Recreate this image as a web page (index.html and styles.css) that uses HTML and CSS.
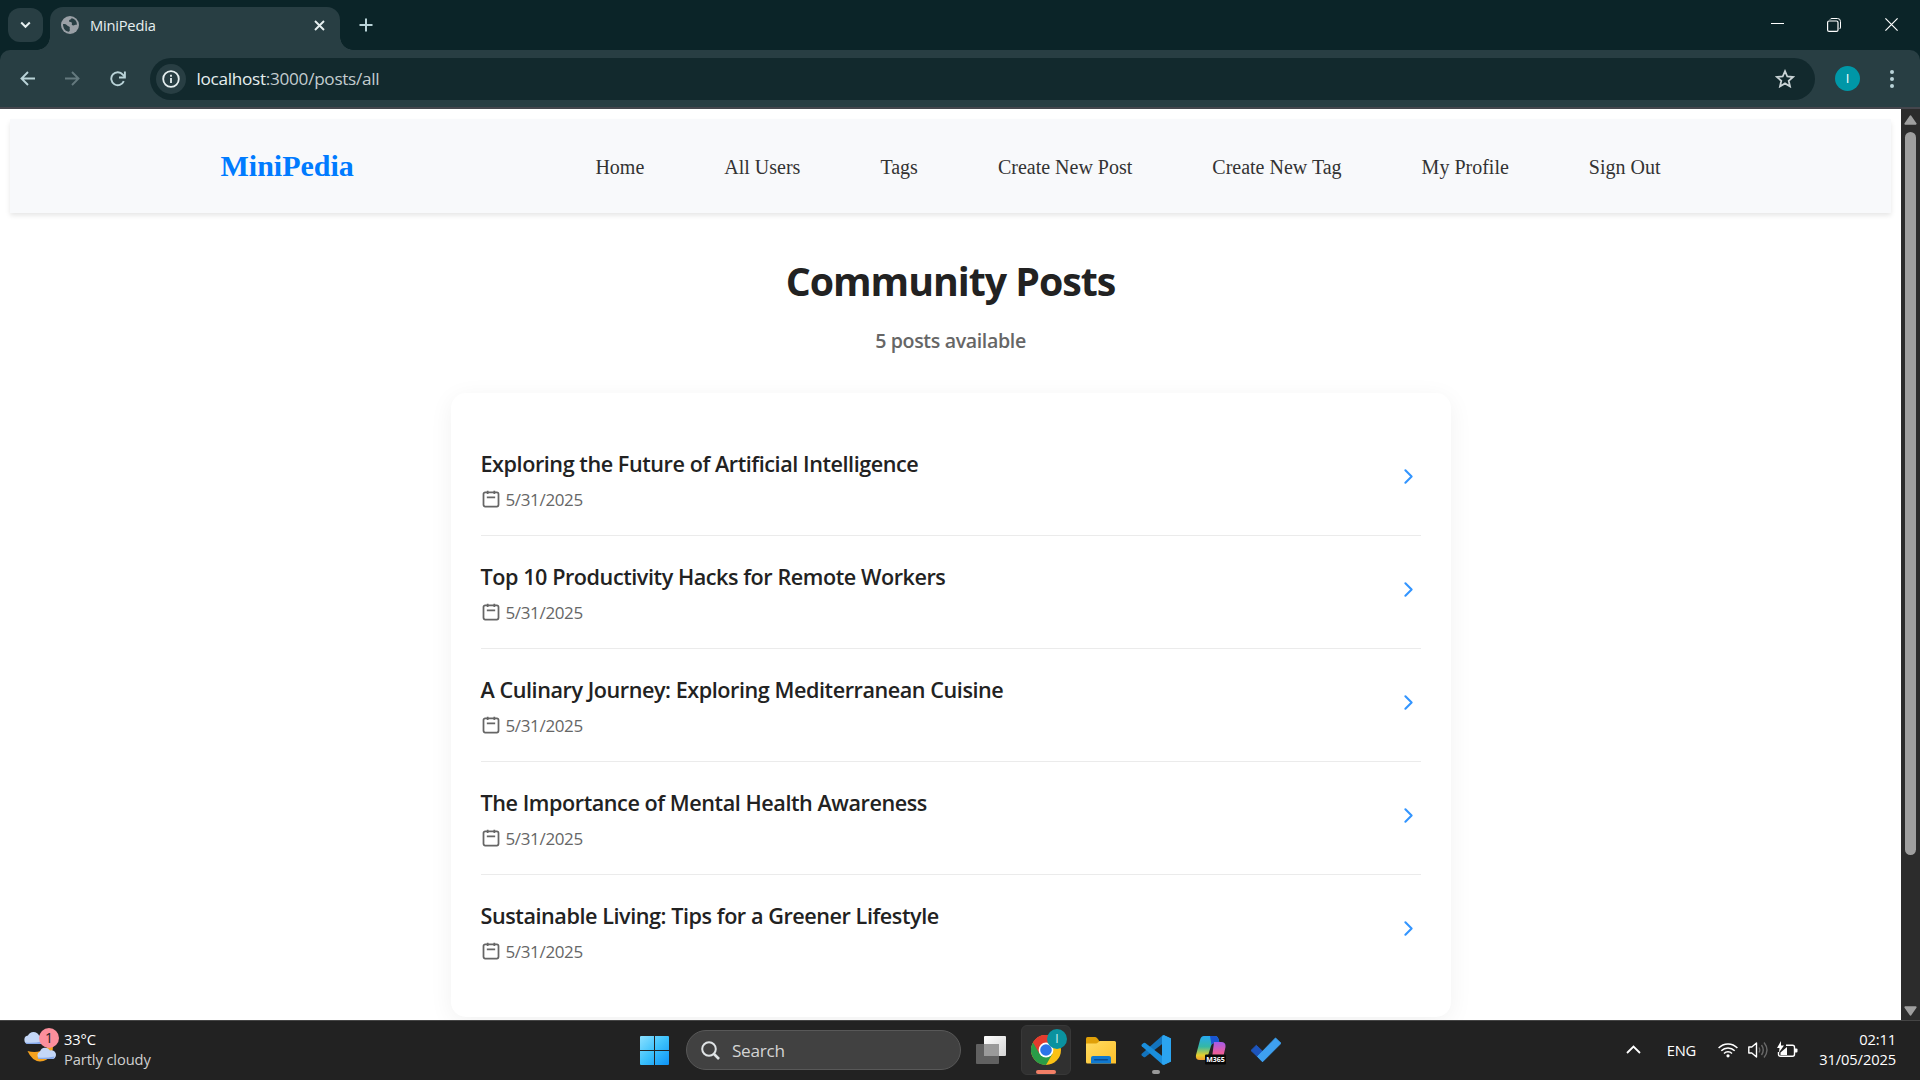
FILE: index.html
```
<!DOCTYPE html>
<html lang="en">
<head>
<meta charset="utf-8">
<title>MiniPedia</title>
<link rel="stylesheet" href="styles.css">
</head>
<body>
<div class="screen">
  <header class="tabstrip">
    <button class="tab-search" aria-label="Search tabs"><svg width="11" height="8" viewBox="0 0 11 8"><path d="M1.2 1.5l4.3 4.3 4.3-4.3" fill="none" stroke="#e6eff0" stroke-width="2"/></svg></button>
    <div class="tab">
      <svg width="18" height="18" viewBox="0 0 18 18"><circle cx="9" cy="9" r="9" fill="#9aa0a6"/><path d="M2 8c2-.3 3.600.3 4.300 1.600.5 1 1.700.7 2.300 1.500.6.800-.3 1.700.2 2.500.4.700-.4 1.700-.900 2.200C4.500 15.500 2 12.600 2 8zM10.500 2.200c-.300 1.300-1.800 1.200-2.400 2.200-.500.9.4 1.500 1.400 1.500 1.400 0 1.700 1.200 1.300 2.200-.3.900.5 1.400 1.500 1.400 1.200 0 2-.8 3.500-.6.5-3.500-1.800-6-5.300-6.700z" fill="#283e43"/></svg>
      <span class="tab-title">MiniPedia</span>
      <svg class="tab-close" width="11" height="11" viewBox="0 0 11 11"><path d="M1 1l9 9M10 1l-9 9" stroke="#e6eff0" stroke-width="1.900"/></svg>
    </div>
    <svg class="new-tab" width="14" height="14" viewBox="0 0 14 14"><path d="M7 .5v13M.5 7h13" stroke="#b9d3d8" stroke-width="2"/></svg>
    <div class="window-controls">
      <svg width="13" height="13" viewBox="0 0 13 13"><path d="M0 5.500h13" stroke="#fff"/></svg>
      <svg width="14" height="14" viewBox="0 0 14 14" fill="none" stroke="#fff"><path d="M3 1.500q.5-1 2-1h5.500q3 0 3 3V9q0 1.500-1 2" /><rect x=".6" y="3" width="10.400" height="10.400" rx="1.500" stroke-width="1.200"/></svg>
      <svg width="13" height="13" viewBox="0 0 13 13"><path d="M.4.4l12.200 12.200M12.600.4L.4 12.600" stroke="#fff" stroke-width="1.200"/></svg>
    </div>
  </header>

  <div class="toolbar">
    <div class="nav-buttons">
      <svg width="15" height="15" viewBox="0 0 15 15"><path d="M15 7.500H1.500M8 1L1.500 7.500 8 14" fill="none" stroke="#b9d3d8" stroke-width="1.900"/></svg>
      <svg width="15" height="15" viewBox="0 0 15 15"><path d="M0 7.500h13.500M7 1l6.500 6.500L7 14" fill="none" stroke="#64797e" stroke-width="1.900"/></svg>
      <svg width="16" height="16" viewBox="0 0 16 16"><path d="M13.800 10.200A6.500 6.500 0 1 1 12.800 3.600L14.800 6" fill="none" stroke="#b9d3d8" stroke-width="1.900"/><path d="M14.900.5v6H9" fill="none" stroke="#b9d3d8" stroke-width="1.900"/></svg>
    </div>
    <div class="omnibox">
      <span class="site-info"><svg width="18" height="18" viewBox="0 0 18 18"><circle cx="9" cy="9" r="7.800" fill="none" stroke="#e6eff0" stroke-width="1.800"/><path d="M9 8v5M9 4.800v1.900" stroke="#e6eff0" stroke-width="1.800"/></svg></span>
      <span class="url"><b>localhost</b>:3000/posts/all</span>
      <svg class="star" width="20" height="19" viewBox="0 0 20 19"><path d="M10 2.200l2.300 5.300 5.800.5-4.400 3.800 1.300 5.600-5-3-5 3 1.300-5.600L1.900 8l5.800-.5z" fill="none" stroke="#c9d3d5" stroke-width="1.800"/></svg>
    </div>
    <span class="profile">I</span>
    <svg class="menu" width="4" height="18" viewBox="0 0 4 18" fill="#b9d3d8"><circle cx="2" cy="2" r="2"/><circle cx="2" cy="9" r="2"/><circle cx="2" cy="16" r="2"/></svg>
  </div>

  <div class="viewport">
    <div class="page">
      <nav class="navbar">
        <div class="navbar-inner">
          <a class="logo">MiniPedia</a>
          <ul class="links">
            <li>Home</li><li>All Users</li><li>Tags</li><li>Create New Post</li><li>Create New Tag</li><li>My Profile</li><li>Sign Out</li>
          </ul>
        </div>
      </nav>
      <main class="posts">
        <h1>Community Posts</h1>
        <p class="count">5 posts available</p>
        <ul class="card">
          <li class="post"><div><h2>Exploring the Future of Artificial Intelligence</h2><p class="date"><svg class="cal"><use href="#cal"/></svg>5/31/2025</p></div><svg class="chev"><use href="#chev"/></svg></li>
          <li class="post"><div><h2>Top 10 Productivity Hacks for Remote Workers</h2><p class="date"><svg class="cal"><use href="#cal"/></svg>5/31/2025</p></div><svg class="chev"><use href="#chev"/></svg></li>
          <li class="post"><div><h2>A Culinary Journey: Exploring Mediterranean Cuisine</h2><p class="date"><svg class="cal"><use href="#cal"/></svg>5/31/2025</p></div><svg class="chev"><use href="#chev"/></svg></li>
          <li class="post"><div><h2>The Importance of Mental Health Awareness</h2><p class="date"><svg class="cal"><use href="#cal"/></svg>5/31/2025</p></div><svg class="chev"><use href="#chev"/></svg></li>
          <li class="post"><div><h2>Sustainable Living: Tips for a Greener Lifestyle</h2><p class="date"><svg class="cal"><use href="#cal"/></svg>5/31/2025</p></div><svg class="chev"><use href="#chev"/></svg></li>
        </ul>
      </main>
    </div>
    <div class="scrollbar">
      <svg width="13" height="10" viewBox="0 0 13 10"><path d="M6.500 1.200L11.700 8.800H1.300z" fill="#9f9f9f" stroke="#9f9f9f" stroke-width="1.800" stroke-linejoin="round"/></svg>
      <span class="thumb"></span>
      <svg class="down" width="13" height="10" viewBox="0 0 13 10"><path d="M6.500 8.800L11.700 1.200H1.300z" fill="#9f9f9f" stroke="#9f9f9f" stroke-width="1.800" stroke-linejoin="round"/></svg>
    </div>
  </div>

  <footer class="taskbar">
    <div class="weather">
      <svg width="35" height="36" viewBox="0 0 35 36">
        <path d="M3.500 24Q8 34 16 34.500C26 34 30.500 25 28.500 15L26 13C26 21 16 27.500 3.500 24z" fill="#f6a21d"/>
        <path d="M4 17a4.300 4.300 0 0 1 0-8.500 6 6 0 0 1 11 0 4.300 4.300 0 0 1 2 8.500z" fill="#c4d7f7"/>
        <path d="M1 15.500q8 1 17-1 0 2.500-2 2.500H4q-2 0-3-1.500z" fill="#86a9ea"/>
        <path d="M16 32a4 4 0 0 1 0-7.500 5.500 5.500 0 0 1 10-1 4.500 4.500 0 0 1 3 8.500z" fill="#c4d7f7"/>
        <path d="M13.500 30.500q8 1 17-1-.5 2.500-2.500 2.500H16q-2 0-2.500-1.500z" fill="#86a9ea"/>
      </svg>
      <span class="alert">1</span>
      <p class="forecast"><span>33°C</span><span class="dim">Partly cloudy</span></p>
    </div>

    <div class="apps">
      <svg class="start" width="29" height="29" viewBox="0 0 29 29"><defs><linearGradient id="win" x1="0" y1="0" x2="29" y2="29" gradientUnits="userSpaceOnUse"><stop offset="0" stop-color="#8be0ff"/><stop offset=".5" stop-color="#3cc1fb"/><stop offset="1" stop-color="#0d92f5"/></linearGradient></defs><path d="M0 1q0-1 1-1h13v14H0zM15 0h13q1 0 1 1v13H15zM0 15h14v14H1q-1 0-1-1zM15 15h14v13q0 1-1 1H15z" fill="url(#win)"/></svg>
      <div class="search"><svg width="19" height="19" viewBox="0 0 19 19" fill="none" stroke="#dfe3e5"><circle cx="8" cy="8" r="6.800" stroke-width="2"/><path d="M13 13l5 5" stroke-width="2.600"/></svg>Search</div>
      <span class="app"><svg width="30" height="28" viewBox="0 0 30 28"><defs><linearGradient id="tv" x2="1" y2="1"><stop stop-color="#fff"/><stop offset="1" stop-color="#d4d4d4"/></linearGradient></defs><rect x="8" width="22" height="20" rx="1" fill="url(#tv)"/><rect y="8" width="23" height="20" rx="1" fill="#666" opacity=".93"/><path d="M8 8h15v12H8z" fill="#9a9a9a"/></svg></span>
      <span class="app active">
        <svg width="30" height="30" viewBox="0 0 30 30"><circle cx="15" cy="15" r="15" fill="#fbc116"/><path d="M15 15L2 7.500a15 15 0 0 1 26 0z" fill="#e33b2e"/><path d="M15 15L2 7.500A15 15 0 0 0 15 30l6.500-11.300z" fill="#2a9c48"/><path d="M15 7.500h13a15 15 0 0 0-26 0L8.500 18.700z" fill="#e33b2e"/><circle cx="15" cy="15" r="7.400" fill="#fff"/><circle cx="15" cy="15" r="5.800" fill="#2c74e8"/></svg>
        <span class="badge">I</span><span class="bar"></span>
      </span>
      <span class="app"><svg width="30" height="28" viewBox="0 0 30 28"><defs><linearGradient id="fold" x2="1" y2="1"><stop stop-color="#ffdc62"/><stop offset="1" stop-color="#fdc02a"/></linearGradient></defs><path d="M0 2.500Q0 1 1.500 1H9q1 0 2 1l2 2.500V8H0z" fill="#e0a008"/><path d="M0 8q0-.5.500-.5H10q1 0 2-1l1.500-1.500h15q1.500 0 1.500 1.500V27.500H1.500Q0 27.500 0 26z" fill="url(#fold)"/><path d="M5 27.500V22q0-2 2-2h16q2 0 2 2v5.500z" fill="#1079d0"/><rect x="8" y="23" width="14" height="1.500" rx=".7" fill="#0a4c91"/></svg></span>
      <span class="app running"><svg width="30" height="30" viewBox="0 0 30 30"><path d="M22.500 0L30 3.500v23L22.500 30z" fill="#2fa4ee"/><path d="M22 0L.8 18.800q-.8 1 0 1.700l1.800 1.500q.8.500 1.700 0L22.500 8z" fill="#1374be"/><path d="M22 30L.8 11.200q-.8-1 0-1.700L2.600 8q.8-.5 1.700 0L22.500 22z" fill="#1a8edb"/><path d="M22.500 0L30 3.500v23L22.500 30 21 28.500V1.500z" fill="#2ba4f0"/></svg><span class="bar"></span></span>
      <span class="app"><svg width="32" height="30" viewBox="0 0 32 30"><defs><linearGradient id="cpa" x1="0" y1="0" x2="0" y2="1"><stop stop-color="#27a9f2"/><stop offset=".45" stop-color="#35b8a4"/><stop offset=".8" stop-color="#e5cf2d"/><stop offset="1" stop-color="#f29b2c"/></linearGradient><linearGradient id="cpb" x1="0" y1="0" x2="0" y2="1"><stop stop-color="#a45bea"/><stop offset=".5" stop-color="#ea5c9f"/><stop offset="1" stop-color="#fb7a5c"/></linearGradient></defs><path d="M9 1h11q2.500 0 3.500 3l1 4h-5q-2.500 0-3.500 3l-3.500 11q-1 3-3.500 3H5q-5 0-4-5L5 5q1-4 4-4z" fill="url(#cpa)"/><path d="M15 1h5q2.500 0 3.500 3l1 4h-5q-2 0-3 2z" fill="#1955d2"/><path d="M19 7h7q5 0 4.500 5L28 23q-1 5-5 5h-9q2-1 3-5z" fill="url(#cpb)"/><rect x="10" y="19.500" width="21" height="10" rx="1" fill="#080808"/><text x="20.500" y="27.200" text-anchor="middle" class="m365">M365</text></svg></span>
      <span class="app"><svg width="30" height="26" viewBox="0 0 30 26"><path d="M5.300 8.300L0 13.500l11.500 11 5-5.500z" fill="#1d55bd" stroke="#1d55bd" stroke-linejoin="round"/><path d="M24.500 1L30 6.300 11.500 24.800 6.500 19.500z" fill="#3ea0f0" stroke="#3ea0f0" stroke-linejoin="round"/></svg></span>
    </div>

    <div class="tray">
      <svg width="15" height="9" viewBox="0 0 15 9"><path d="M1 8l6.500-6.500L14 8" fill="none" stroke="#fff" stroke-width="1.800"/></svg>
      <span class="lang">ENG</span>
      <svg class="wifi" width="20" height="16" viewBox="0 0 20 16" fill="none" stroke="#fff" stroke-width="1.500"><path d="M.6 6a13 13 0 0 1 18.800 0M3.300 8.800a9.400 9.400 0 0 1 13.400 0M6 11.500a5.700 5.700 0 0 1 8 0"/><circle cx="10" cy="13.800" r="1.600" fill="#fff" stroke="none"/></svg>
      <svg class="volume" width="20" height="18" viewBox="0 0 20 18" fill="none" stroke="#fff" stroke-width="1.400"><path d="M.8 6h3l4.700-4v14L3.800 12h-3z" stroke-linejoin="round"/><path d="M11 6.500q1.500 2.500 0 5M13.500 4q3.500 5 0 10M16 1.500q6 7.500 0 15" stroke="#696969"/></svg>
      <svg class="battery" width="21" height="18" viewBox="0 0 21 18"><path d="M9 4.200h6.500q2 0 2 2v7q0 2-2 2h-12q-2 0-2-2V11" fill="none" stroke="#fff" stroke-width="1.400"/><path d="M18 7.500h1.500q1 0 1 1v2q0 1-1 1H18z" fill="#fff"/><path d="M4 0L0 7h2.500L2 11.500 7 4.500H4zM10 6v8H3.500v-2.500z" fill="#fff"/></svg>
      <p class="clock"><span>02:11</span><span>31/05/2025</span></p>
    </div>
  </footer>
</div>

<svg class="sprite" width="0" height="0">
  <symbol id="cal" viewBox="0 0 24 24"><path d="M5 4h14a2 2 0 0 1 2 2v13a2 2 0 0 1-2 2H5a2 2 0 0 1-2-2V6a2 2 0 0 1 2-2zM8 2v4M16 2v4M7 10h10" fill="none" stroke="#666" stroke-width="2.100"/></symbol>
  <symbol id="chev" viewBox="0 0 24 24"><path d="M9 18l6-6-6-6" fill="none" stroke="#3395ff" stroke-width="2" stroke-linecap="round" stroke-linejoin="round"/></symbol>
</svg>
</body>
</html>
```
FILE: styles.css
```
* { box-sizing: border-box; margin: 0; padding: 0; }
ul { list-style: none; }
svg { display: block; flex: none; }
body { font-family: "Open Sans", "Noto Sans", sans-serif; background: #fff; overflow: hidden; }
.sprite { display: none; }
.screen { width: 1920px; height: 1080px; display: flex; flex-direction: column; background: #0b2428; }

/* Tab strip */
.tabstrip { height: 50px; flex: none; display: flex; align-items: flex-start; padding: 7px 22px 0 8px; }
.tab-search { width: 35px; height: 34px; margin-top: 1px; border: 0; border-radius: 12px; background: #283e43; display: flex; align-items: center; justify-content: center; }
.tab { position: relative; width: 290px; height: 43px; margin-left: 7px; padding: 0 15px 7px 11px; background: #283e43; border-radius: 13px 13px 0 0; display: flex; align-items: center; gap: 11px; }
.tab::before, .tab::after { content: ""; position: absolute; bottom: 0; width: 13px; height: 13px; }
.tab::before { right: 100%; background: radial-gradient(circle at 0 0, transparent 12.5px, #283e43 13px); }
.tab::after { left: 100%; background: radial-gradient(circle at 100% 0, transparent 12.5px, #283e43 13px); }
.tab-title { flex: 1; padding-bottom: 1px; font-size: 14.7px; letter-spacing: -0.22px; line-height: 20px; color: #e6eff0; }
.new-tab { margin: 11px 0 0 18.5px; }
.window-controls { margin: 10.5px 0 0 auto; display: flex; gap: 44px; }
.window-controls svg:first-child { margin-right: -1px; }

/* Toolbar */
.toolbar { height: 59px; flex: none; background: #283e43; border-bottom: 2px solid #45464d; border-radius: 10px 10px 0 0; display: flex; align-items: center; padding-left: 20px; }
.nav-buttons { display: flex; gap: 30px; width: 130px; }
.nav-buttons svg:last-child { margin-left: -0.5px; }
.omnibox { width: 1665px; height: 42px; border-radius: 21px; background: #12292d; display: flex; align-items: center; padding: 0 20px 0 6px; }
.site-info { width: 30px; height: 30px; border-radius: 50%; background: #283e43; display: flex; align-items: center; justify-content: center; }
.url { flex: 1; margin-left: 10.5px; padding-top: 1px; font-size: 17.2px; line-height: 24px; letter-spacing: -0.3px; color: #c3cccf; }
.url b { font-weight: 400; color: #e6eff0; }
.profile { width: 25px; height: 25px; margin-left: 20px; border-radius: 50%; background: #0097a7; color: #fff; font-size: 13px; line-height: 25px; text-align: center; }
.menu { margin-left: 30px; }

/* Web page */
.viewport { height: 911px; flex: none; display: flex; overflow: hidden; background: #fff; }
.page { width: 1901px; padding: 10px; overflow: hidden; }
.navbar { height: 94px; background: #f8f9fb; box-shadow: 0 2.5px 5px rgba(0, 0, 0, .1); display: flex; justify-content: center; font-family: "Liberation Serif", serif; }
.navbar-inner { width: 1500px; padding: 0 40px 0 20px; display: flex; align-items: center; justify-content: space-between; }
.logo { font-size: 30px; font-weight: 700; color: #007bff; }
.links { display: flex; gap: 80px; padding-top: 2px; font-size: 20px; color: #333; }
.posts { width: 1000px; margin: 44px auto 0; text-align: center; }
.posts h1 { font-size: 39.3px; line-height: 48px; letter-spacing: -1.02px; color: #222; }
.count { margin-top: 21px; font-size: 19.6px; line-height: 30px; font-weight: 600; letter-spacing: -0.36px; color: #666; }
.card { margin-top: 37px; padding: 30px 30px 29px; border-radius: 15px; background: #fff; box-shadow: 0 5px 25px rgba(0, 0, 0, .06); text-align: left; }
.post { height: 113px; padding-top: 25px; border-bottom: 1px solid #ebebeb; display: flex; justify-content: space-between; }
.post:last-child { border-bottom: 0; }
.post h2 { font-size: 21.6px; line-height: 31px; font-weight: 600; letter-spacing: -0.44px; color: #222; }
.date { margin-top: 8px; display: flex; align-items: center; gap: 5px; font-size: 17px; line-height: 26px; letter-spacing: -0.35px; color: #666; }
.cal { width: 20px; height: 20px; margin-top: -2px; }
.chev { width: 25px; height: 25px; margin-top: 16px; }
.scrollbar { width: 19px; background: #2c2c2c; display: flex; flex-direction: column; align-items: center; padding: 6px 0 4px; }
.thumb { width: 11px; height: 723px; margin-top: 7px; border-radius: 6px; background: #9f9f9f; }
.down { margin-top: auto; }

/* Taskbar */
.taskbar { height: 60px; flex: none; background: #222; border-top: 1px solid #454545; display: grid; grid-template-columns: 640px 660px 1fr; color: #fff; }
.weather { position: relative; display: flex; padding: 6px 0 0 24px; }
.alert { position: absolute; left: 39px; top: 7px; width: 20px; height: 20px; border-radius: 50%; background: #fc8f9c; color: #222; font-size: 14px; line-height: 20px; text-align: center; }
.forecast { margin: 2px 0 0 5px; display: flex; flex-direction: column; font-size: 14.7px; letter-spacing: -0.1px; line-height: 20px; }
.dim { color: #cfcfcf; }
.apps { display: flex; align-items: center; padding-bottom: 1px; }
.search { width: 275px; height: 40px; margin-left: 17px; padding-left: 14px; border: 1px solid #585858; border-radius: 20px; background: #414141; display: flex; align-items: center; gap: 12px; font-size: 17.2px; letter-spacing: -0.3px; color: #d4d4d4; }
.app { position: relative; width: 50px; height: 50px; margin-left: 5px; border-radius: 6px; display: flex; align-items: center; justify-content: center; }
.active { background: #303030; border: 1px solid #383838; }
.badge { position: absolute; right: 3px; top: 3px; width: 20px; height: 20px; border-radius: 50%; background: #0a929f; font-size: 12px; line-height: 20px; text-align: center; color: #d6eef0; }
.bar { position: absolute; left: 14px; bottom: 0; width: 20px; height: 4px; border-radius: 2px; background: #f27f66; }
.running .bar { left: 21px; bottom: 1px; width: 8px; background: #999; }
.m365 { font: 700 7px "Open Sans", sans-serif; fill: #fff; }
.tray { display: flex; align-items: center; padding: 0 24px 2px 0; justify-content: flex-end; }
.lang { margin-left: 26px; font-size: 14.7px; line-height: 20px; letter-spacing: -0.2px; }
.wifi { margin-left: 22px; }
.volume { margin-left: 10px; }
.battery { margin-left: 9px; }
.clock { width: 98px; padding-bottom: 2px; display: flex; flex-direction: column; text-align: right; font-size: 14.7px; letter-spacing: -0.12px; line-height: 20px; }
```
